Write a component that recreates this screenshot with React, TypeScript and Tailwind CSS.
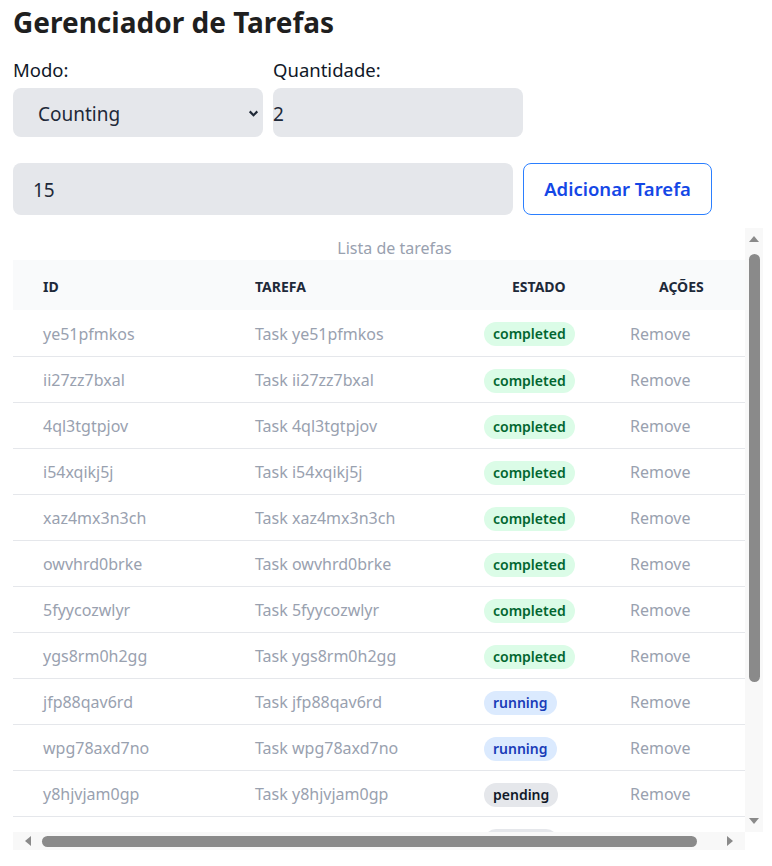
import { useState } from 'react'

type Status = 'completed' | 'running' | 'pending'
type Task = { id: string; status: Status }

const TASKS: Task[] = [
  { id: 'ye51pfmkos', status: 'completed' },
  { id: 'ii27zz7bxal', status: 'completed' },
  { id: '4ql3tgtpjov', status: 'completed' },
  { id: 'i54xqikj5j', status: 'completed' },
  { id: 'xaz4mx3n3ch', status: 'completed' },
  { id: 'owvhrd0brke', status: 'completed' },
  { id: '5fyycozwlyr', status: 'completed' },
  { id: 'ygs8rm0h2gg', status: 'completed' },
  { id: 'jfp88qav6rd', status: 'running' },
  { id: 'wpg78axd7no', status: 'running' },
  { id: 'y8hjvjam0gp', status: 'pending' },
  { id: 'k3m9zq1tx4b', status: 'pending' },
  { id: 'p0wd7hs2nce', status: 'pending' },
  { id: 'r6yf4lu8vaj', status: 'pending' },
  { id: 'b2tq5ne9oxg', status: 'pending' },
]

const BADGE: Record<Status, string> = {
  completed: 'bg-green-100 text-green-800',
  running: 'bg-blue-100 text-blue-800',
  pending: 'bg-gray-200 text-gray-900',
}

export default function App() {
  const [mode, setMode] = useState('Counting')
  const [qty, setQty] = useState('2')
  const [value, setValue] = useState('15')
  const [tasks, setTasks] = useState(TASKS)

  return (
    <div className="pl-[13px] pt-[2px] text-gray-900" style={{ fontFamily: '"Noto Sans", sans-serif' }}>
      <h1 className="text-[28px] leading-[40px] font-bold text-[#1f1f1f]">Gerenciador de Tarefas</h1>

      <div className="flex gap-[10px] mt-[14px]">
        <div className="flex flex-col gap-[4px] w-[250px]">
          <label className="text-[18.5px] leading-7">Modo:</label>
          <div className="relative">
            <select value={mode} onChange={e => setMode(e.target.value)}
              className="appearance-none w-full h-[49px] rounded-lg bg-gray-200 pl-[25px] pt-[3px] text-[19px] text-gray-800 outline-none">
              <option>Counting</option>
              <option>Timer</option>
            </select>
            <svg className="absolute right-[3px] top-1/2 -translate-y-1/2 pointer-events-none" width="13" height="13" viewBox="0 0 12 12">
              <path d="M2.5 4.5 L6 8 L9.5 4.5" fill="none" stroke="#1f2937" strokeWidth="2" />
            </svg>
          </div>
        </div>
        <div className="flex flex-col gap-[4px] w-[250px]">
          <label className="text-[18.5px] leading-7">Quantidade:</label>
          <input value={qty} onChange={e => setQty(e.target.value)}
            className="w-full h-[49px] rounded-lg bg-gray-200 pt-[3px] text-[19px] text-gray-800 outline-none" />
        </div>
      </div>

      <div className="flex gap-[10px] mt-[26px]">
        <input value={value} onChange={e => setValue(e.target.value)}
          className="w-[500px] h-[52px] rounded-lg bg-gray-200 pl-[20px] pt-[2px] text-[19px] text-gray-800 outline-none" />
        <button className="w-[189px] h-[52px] rounded-lg border border-blue-500 bg-white text-[18.5px] font-semibold text-blue-700">
          Adicionar Tarefa
        </button>
      </div>

      <div className="mt-[13px] w-[750px] h-[622px] grid grid-cols-[732px_18px] grid-rows-[604px_18px]">
        <div className="overflow-hidden">
          <table className="table-fixed w-[763px] border-collapse">
            <caption className="caption-top pt-[8px] text-[16px] leading-6 text-gray-400">Lista de tarefas</caption>
            <colgroup>
              <col className="w-[212px]" />
              <col className="w-[229px]" />
              <col className="w-[146px]" />
              <col className="w-[176px]" />
            </colgroup>
            <thead className="bg-gray-50">
              <tr className="h-[50px] text-[14px] font-bold uppercase text-gray-800 text-left">
                <th className="pl-[30px] pt-[2px]">ID</th>
                <th className="pl-[30px] pt-[2px]">Tarefa</th>
                <th className="pl-[58px] pt-[2px]">Estado</th>
                <th className="pl-[59px] pt-[2px]">Ações</th>
              </tr>
            </thead>
            <tbody>
              {tasks.map(t => (
                <tr key={t.id} className="h-[46px] border-b border-gray-200 text-[16px] text-gray-400">
                  <td className="pl-[30px] pt-[2px]">{t.id}</td>
                  <td className="pl-[30px] pt-[2px]">Task {t.id}</td>
                  <td className="pl-[30px] pt-[2px]">
                    <span className={`inline-block rounded-full px-[9px] py-[2px] text-[14px] font-semibold leading-5 ${BADGE[t.status]}`}>
                      {t.status}
                    </span>
                  </td>
                  <td className="pl-[30px] pt-[2px]">
                    <button onClick={() => setTasks(tasks.filter(x => x.id !== t.id))} className="text-gray-400">Remove</button>
                  </td>
                </tr>
              ))}
            </tbody>
          </table>
        </div>

        {/* vertical scrollbar */}
        <div className="bg-[#f8f8f8] flex flex-col items-center">
          <svg width="12" height="22" viewBox="0 0 12 22" className="shrink-0">
            <path d="M1 14 L6 8 L11 14 Z" fill="#8a8a8a" />
          </svg>
          <div className="flex-1 w-full flex flex-col items-center pt-[4px]">
            <div className="w-[11px] h-[428px] rounded-full bg-[#8a8a8a]" />
          </div>
          <svg width="12" height="22" viewBox="0 0 12 22" className="shrink-0">
            <path d="M1 8 L6 14 L11 8 Z" fill="#8a8a8a" />
          </svg>
        </div>

        {/* horizontal scrollbar */}
        <div className="bg-[#f8f8f8] flex items-center">
          <svg width="22" height="12" viewBox="0 0 22 12" className="shrink-0 ml-[2px]">
            <path d="M16 1 L10 6 L16 11 Z" fill="#8a8a8a" />
          </svg>
          <div className="flex-1 flex items-center pl-[5px] pr-[23px]">
            <div className="w-[655px] h-[11px] rounded-full bg-[#8a8a8a]" />
          </div>
          <svg width="22" height="12" viewBox="0 0 22 12" className="shrink-0 mr-[2px]">
            <path d="M6 1 L12 6 L6 11 Z" fill="#8a8a8a" />
          </svg>
        </div>
        <div className="bg-white" />
      </div>
    </div>
  )
}
